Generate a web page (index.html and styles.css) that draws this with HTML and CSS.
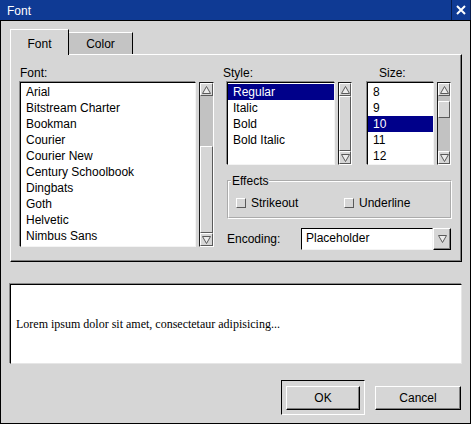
FILE: index.html
```html
<!DOCTYPE html>
<html>
<head>
<meta charset="utf-8">
<link rel="stylesheet" href="styles.css">
</head>
<body>
<div class="window">
  <div class="titlebar">
    <span class="title">Font</span>
    <span class="close">
      <svg width="10" height="10" viewBox="0 0 10 10"><path d="M1 1 L9 9 M9 1 L1 9" stroke="#fff" stroke-width="2" fill="none"/></svg>
    </span>
  </div>
  <div class="dialog">
    <div class="tabs">
      <div class="tab tab-active">Font</div>
      <div class="tab">Color</div>
    </div>
    <div class="panel">
      <div class="col-font">
        <div class="label">Font:</div>
        <div class="listwrap">
          <ul class="list list-font">
            <li>Arial</li>
            <li>Bitstream Charter</li>
            <li>Bookman</li>
            <li>Courier</li>
            <li>Courier New</li>
            <li>Century Schoolbook</li>
            <li>Dingbats</li>
            <li>Goth</li>
            <li>Helvetic</li>
            <li>Nimbus Sans</li>
          </ul>
          <div class="sb sb-font">
            <div class="sb-btn"><svg width="9" height="8"><polygon points="0.5,7.5 4.5,0.5 8.5,7.5" fill="#ececec" stroke="#5a5a5a"/></svg></div>
            <div class="sb-track"><div class="sb-thumb thumb-font"></div></div>
            <div class="sb-btn"><svg width="9" height="8"><polygon points="0.5,0.5 8.5,0.5 4.5,7.5" fill="#ececec" stroke="#5a5a5a"/></svg></div>
          </div>
        </div>
      </div>
      <div class="col-right">
        <div class="toplists">
          <div class="col-style">
            <div class="label label-style">Style:</div>
            <div class="listwrap">
              <ul class="list list-style">
                <li class="sel">Regular</li>
                <li>Italic</li>
                <li>Bold</li>
                <li>Bold Italic</li>
              </ul>
              <div class="sb sb-small">
                <div class="sb-btn"><svg width="9" height="8"><polygon points="0.5,7.5 4.5,0.5 8.5,7.5" fill="#ececec" stroke="#5a5a5a"/></svg></div>
                <div class="sb-track"><div class="sb-thumb thumb-style"></div></div>
                <div class="sb-btn"><svg width="9" height="8"><polygon points="0.5,0.5 8.5,0.5 4.5,7.5" fill="#ececec" stroke="#5a5a5a"/></svg></div>
              </div>
            </div>
          </div>
          <div class="col-size">
            <div class="label label-size">Size:</div>
            <div class="listwrap">
              <ul class="list list-size">
                <li>8</li>
                <li>9</li>
                <li class="sel">10</li>
                <li>11</li>
                <li>12</li>
              </ul>
              <div class="sb sb-small">
                <div class="sb-btn"><svg width="9" height="8"><polygon points="0.5,7.5 4.5,0.5 8.5,7.5" fill="#ececec" stroke="#5a5a5a"/></svg></div>
                <div class="sb-track"><div class="sb-thumb thumb-size"></div></div>
                <div class="sb-btn"><svg width="9" height="8"><polygon points="0.5,0.5 8.5,0.5 4.5,7.5" fill="#ececec" stroke="#5a5a5a"/></svg></div>
              </div>
            </div>
          </div>
        </div>
        <fieldset class="effects">
          <legend>Effects</legend>
          <div class="checks">
            <div class="check check-first"><span class="box"></span><span>Strikeout</span></div>
            <div class="check"><span class="box"></span><span>Underline</span></div>
          </div>
        </fieldset>
        <div class="encoding">
          <span class="enc-label">Encoding:</span>
          <div class="combo">
            <div class="combo-field">Placeholder</div>
            <div class="combo-btn"><svg width="9" height="8"><polygon points="0.5,0.5 8.5,0.5 4.5,7.5" fill="#ececec" stroke="#5a5a5a"/></svg></div>
          </div>
        </div>
      </div>
    </div>
    <div class="preview">Lorem ipsum dolor sit amet, consectetaur adipisicing...</div>
    <div class="buttons">
      <div class="default-frame"><div class="btn btn-ok">OK</div></div>
      <div class="btn btn-cancel">Cancel</div>
    </div>
  </div>
</div>
</body>
</html>
```
FILE: styles.css
```css
* { box-sizing: border-box; }
html, body { margin: 0; padding: 0; }
body {
  width: 471px;
  height: 424px;
  overflow: hidden;
  background: #d6d6d6;
  color: #000;
  font-family: "Liberation Sans", Arial, sans-serif;
  font-size: 12px;
  line-height: 14px;
}
.window {
  width: 471px;
  height: 424px;
  display: flex;
  flex-direction: column;
}
.titlebar {
  height: 21px;
  flex: none;
  background: #0f3a94;
  border-bottom: 1px solid #000;
  display: flex;
  align-items: center;
  justify-content: space-between;
  color: #fff;
  padding-left: 7px;
}
.title { padding-top: 2px; }
.close {
  width: 20px;
  height: 20px;
  border-left: 1px solid #071c4c;
  border-right: 1px solid #071c4c;
  display: flex;
  align-items: center;
  justify-content: center;
}
.dialog {
  flex: 1;
  border: 1px solid #000;
  border-top: 0;
  padding: 8px 8px 0 9px;
  display: flex;
  flex-direction: column;
}
.tabs {
  display: flex;
  align-items: flex-end;
  height: 25px;
  flex: none;
  position: relative;
  z-index: 1;
}
.tab {
  width: 64px;
  height: 22px;
  background: #c4c4c4;
  border-top: 1px solid #fff;
  border-right: 1px solid #000;
  text-align: center;
  padding-top: 4px;
}
.tab-active {
  width: 59px;
  height: 26px;
  margin-bottom: -1px;
  background: #d6d6d6;
  border-left: 1px solid #fff;
  padding-top: 7px;
}
.panel {
  height: 208px;
  flex: none;
  border: 1px solid;
  border-color: #fff #000 #000 #fff;
  box-shadow: inset -1px -1px 0 #808080;
  display: flex;
  gap: 13px;
  padding: 11px 0 0 9px;
}
.label { height: 14px; margin-bottom: 2px; }
.label-style { margin-left: -4px; }
.label-size { margin-left: 12px; }
.listwrap { display: flex; gap: 3px; }
.list {
  margin: 0;
  padding: 1px 0 0 0;
  list-style: none;
  background: #fff;
  border: 1px solid;
  border-color: #000 #f4f4f4 #f4f4f4 #000;
  box-shadow: -1px -1px 0 #8a8a8a;
  overflow: hidden;
}
.list li {
  height: 16px;
  line-height: 16px;
  padding-left: 5px;
  white-space: nowrap;
}
.list li.sel { background: #00008a; color: #fff; }
.list-font { width: 176px; height: 165px; }
.list-style { width: 108px; height: 83px; }
.list-size { width: 67px; height: 83px; }
.sb {
  display: flex;
  flex-direction: column;
  border: 1px solid;
  border-color: #1a1a1a #fff #fff #1a1a1a;
  background: #c2c2c2;
}
.sb-font { width: 15px; height: 165px; }
.sb-small { width: 14px; height: 83px; }
.sb-btn {
  height: 13px;
  flex: none;
  background: #d6d6d6;
  border: 1px solid;
  border-color: #fff #5a5a5a #5a5a5a #fff;
  display: flex;
  align-items: center;
  justify-content: center;
}
.sb-btn svg { display: block; }
.sb-track { flex: 1; display: flex; flex-direction: column; }
.sb-thumb {
  background: #d6d6d6;
  border: 1px solid;
  border-color: #fff #5a5a5a #5a5a5a #fff;
}
.thumb-font { margin-top: 50px; flex: 1; }
.thumb-style { flex: 1; }
.thumb-size { margin-top: 5px; height: 17px; }
.col-font { width: 194px; }
.col-right { width: 225px; display: flex; flex-direction: column; }
.toplists { display: flex; gap: 15px; }
.effects {
  margin: 9px 0 0 0;
  padding: 0 0 7px 0;
  width: 225px;
  border: 2px groove #fff;
  min-width: 0;
}
.effects legend {
  margin-left: 2px;
  padding: 0 1px;
  line-height: 14px;
}
.checks { display: flex; padding: 8px 0 0 7px; }
.check { display: flex; align-items: center; gap: 5px; height: 14px; }
.check-first { width: 108px; }
.box {
  width: 10px;
  height: 10px;
  background: #d6d6d6;
  border: 1px solid;
  border-color: #fff #5a5a5a #5a5a5a #fff;
}
.encoding {
  margin-top: 9px;
  display: flex;
  align-items: center;
  height: 22px;
}
.enc-label { width: 74px; }
.combo { display: flex; width: 150px; height: 22px; }
.combo-field {
  flex: 1;
  background: #fff;
  border: 1px solid;
  border-color: #000 #f4f4f4 #f4f4f4 #000;
  padding-left: 4px;
  line-height: 19px;
}
.combo-btn {
  width: 18px;
  background: #d6d6d6;
  border: 1px solid;
  border-color: #fff #000 #000 #fff;
  box-shadow: inset -1px -1px 0 #808080;
  display: flex;
  align-items: center;
  justify-content: center;
}
.preview {
  margin-top: 22px;
  height: 80px;
  flex: none;
  background: #fff;
  border: 1px solid;
  border-color: #000 #e6e6e6 #e6e6e6 #000;
  box-shadow: -1px -1px 0 #8a8a8a;
  display: flex;
  align-items: center;
  padding-left: 5px;
  font-family: "Liberation Serif", "Times New Roman", serif;
  font-size: 12px;
}
.buttons {
  margin-top: 16px;
  display: flex;
  justify-content: flex-end;
  align-items: center;
  gap: 10px;
  padding-right: 1px;
}
.default-frame {
  width: 84px;
  height: 35px;
  border: 1px solid;
  border-color: #000 #fff #fff #000;
  padding: 5px 4px 4px 4px;
}
.btn {
  height: 24px;
  background: #d6d6d6;
  border: 1px solid;
  border-color: #fff #000 #000 #fff;
  box-shadow: inset -1px -1px 0 #808080;
  display: flex;
  align-items: center;
  justify-content: center;
}
.btn-ok { width: 74px; }
.btn-cancel { width: 86px; }
```
